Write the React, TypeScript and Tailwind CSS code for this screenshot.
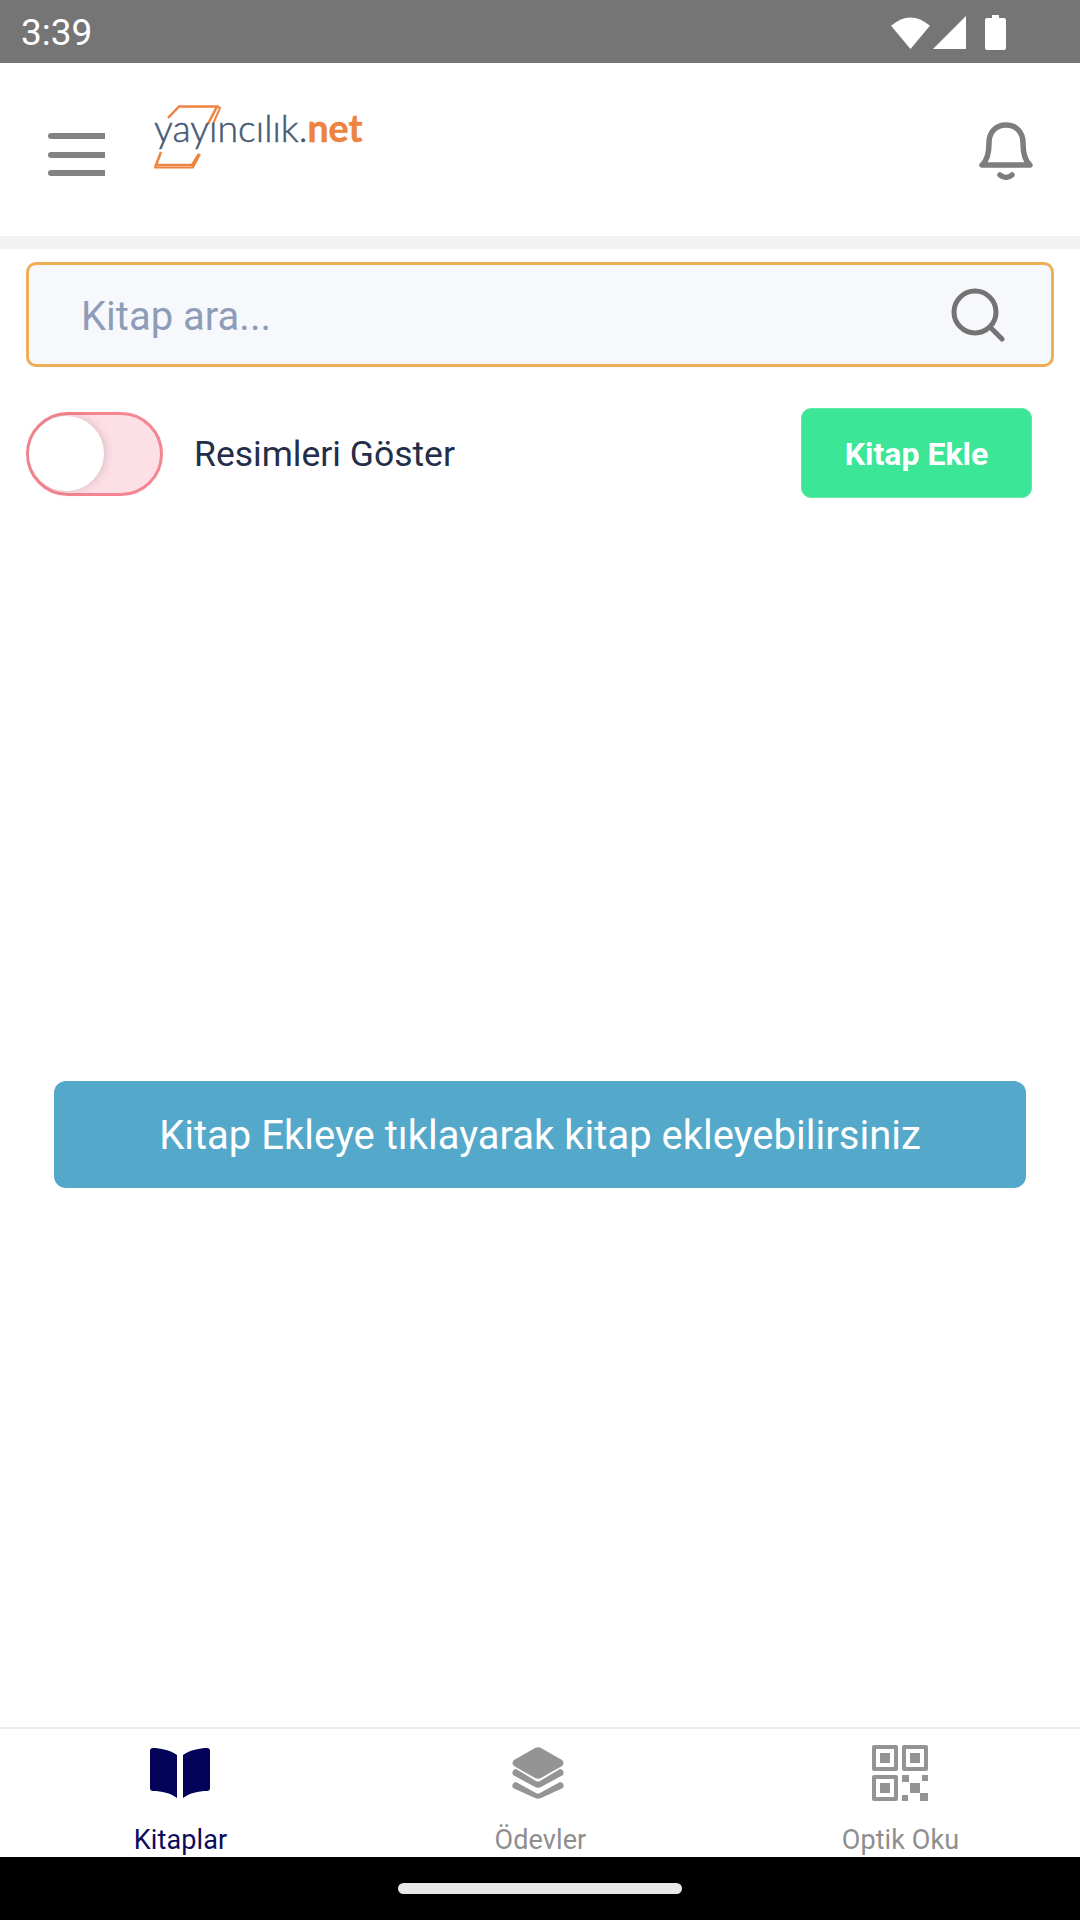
import { useState } from "react";

const roboto = "font-['Roboto',sans-serif]";

const StatusBar = () => (
  <div className="h-[63px] bg-[#757575] flex items-center justify-between pl-[21px] pr-[74px] shrink-0">
    <span className={`${roboto} text-[37px] leading-none text-white mt-[1px]`}>3:39</span>
    <div className="flex items-center mt-[1px]">
      <svg width="39" height="33" viewBox="0 0 40 34" className="mr-[3px]">
        <path d="M20 34 L0 10 Q20 -7 40 10 Z" fill="#fff" />
      </svg>
      <svg width="33" height="33" viewBox="0 0 34 34" className="mr-[19px]">
        <path d="M34 0 V34 H0 Z" fill="#fff" />
      </svg>
      <svg width="21" height="35" viewBox="0 0 21 35">
        <path d="M7 0 H14 V3 H19 Q21 3 21 5 V33 Q21 35 19 35 H2 Q0 35 0 33 V5 Q0 3 2 3 H7 Z" fill="#fff" />
      </svg>
    </div>
  </div>
);

const Logo = () => (
  <div className="relative w-[210px] h-[64px] mt-[-25px] ml-[49px]">
    <svg width="72" height="64" viewBox="0 0 72 64" className="absolute left-0 top-0">
      <path d="M14 13 L25 1.5 H63 L54 19 M45 49 L38 60 H2 L7 47" fill="none" stroke="#ec8440" strokeWidth="2.5" />
      <path d="M63 1.5 L66 3 L59 19 M46 49 L39 62.5 H1 L2 60" fill="none" stroke="#ec8440" strokeWidth="2" />
    </svg>
    <span className="absolute left-0 top-[3px] whitespace-nowrap font-['Lato',sans-serif] text-[37.5px] leading-[40px]">
      <span className="font-light text-[#465a75] [-webkit-text-stroke:0.5px_#465a75]">yayıncılık.</span>
      <span className="font-bold text-[#ec8440] [-webkit-text-stroke:0.5px_#ec8440]">net</span>
    </span>
  </div>
);

const Header = () => (
  <div className="h-[173px] bg-white flex items-center pl-[48px] pr-[47px] shrink-0">
    <div className="flex flex-col gap-[12.5px] w-[57px] mt-[10px]">
      <div className="h-[6px] rounded-l-full bg-[#858283]" />
      <div className="h-[6px] rounded-l-full bg-[#858283]" />
      <div className="h-[6px] rounded-l-full bg-[#858283]" />
    </div>
    <Logo />
    <svg width="54" height="60" viewBox="0 0 54 60" className="ml-auto mt-[4px]" fill="none" stroke="#7f7c7d" strokeWidth="5.5" strokeLinecap="round" strokeLinejoin="round">
      <path d="M3 43 H51 C45 38 44 30 44 21 C44 10 37 3 27 3 C17 3 10 10 10 21 C10 30 9 38 3 43 Z" />
      <path d="M21 53 Q27 58 33 53" />
    </svg>
  </div>
);

const SearchBox = () => (
  <div className="mt-[13px] mx-[26px] h-[105px] rounded-[10px] border-[3px] border-[#edae55] bg-[#f7f8fc] flex items-center pl-[52px] pr-[46px]">
    <span className={`${roboto} text-[40px] text-[#8d9db8] mt-[4px]`}>Kitap ara...</span>
    <svg width="54" height="54" viewBox="0 0 54 54" className="ml-auto" fill="none" stroke="#737373" strokeWidth="5" strokeLinecap="round">
      <circle cx="24" cy="24" r="21" />
      <path d="M39 39 L51 51" />
    </svg>
  </div>
);

const Toggle = () => {
  const [on, setOn] = useState(false);
  return (
    <button
      onClick={() => setOn(!on)}
      className={`relative w-[137px] h-[84px] mt-[1px] rounded-full border-[3px] border-[#f58590] bg-[#fddfe6] flex items-center shrink-0 ${on ? "justify-end" : "justify-start"}`}
    >
      <span className="w-[75px] h-[75px] rounded-full bg-white shadow-[2px_0_8px_rgba(90,60,70,0.2)]" />
    </button>
  );
};

const Tab = ({ label, active, children }: { label: string; active?: boolean; children: React.ReactNode }) => (
  <div className="flex-1 h-full flex flex-col items-center relative overflow-hidden">
    <div className="h-[56px] mt-[16px] flex items-center justify-center">{children}</div>
    <span className={`${roboto} absolute top-[95px] ml-[1px] text-[27px] leading-[32px] tracking-[0.1px] ${active ? "text-[#0b0b5c]" : "text-[#8e8e8e]"}`}>
      {label}
    </span>
  </div>
);

const App = () => {
  return (
    <div className="w-[1080px] h-[1920px] bg-white flex flex-col overflow-hidden">
      <StatusBar />
      <Header />
      <div className="h-[13px] bg-[#f2f2f2] shrink-0" />
      <div className="flex-1 flex flex-col">
        <SearchBox />
        <div className="mt-[41px] pl-[26px] pr-[48px] flex items-center">
          <Toggle />
          <span className={`${roboto} ml-[31px] text-[35.5px] text-[#242e49] mt-[4px]`}>Resimleri Göster</span>
          <div className={`${roboto} ml-auto w-[231px] h-[90px] pt-[1px] rounded-[10px] border border-[#5fe8a9] bg-[#3be696] flex items-center justify-center text-[32px] font-bold text-white`}>
            Kitap Ekle
          </div>
        </div>
        <div className="mt-[583px] mx-[54px] h-[107px] rounded-[12px] bg-[#54a8c9] flex items-center justify-center">
          <span className={`${roboto} text-[40px] text-white mt-[2px]`}>Kitap Ekleye tıklayarak kitap ekleyebilirsiniz</span>
        </div>
      </div>
      <div className="h-[130px] border-t-2 border-[#ececec] flex shrink-0 bg-white">
        <Tab label="Kitaplar" active>
          <svg width="60" height="50" viewBox="0 0 60 50" fill="#020258">
            <path d="M27 7 C20 2 10 0 3 0 Q0 0 0 3 V40 Q0 43 3 43 C12 43 20 45 27 50 Z" />
            <path d="M33 7 C40 2 50 0 57 0 Q60 0 60 3 V40 Q60 43 57 43 C48 43 40 45 33 50 Z" />
          </svg>
        </Tab>
        <Tab label="Ödevler">
          <svg width="52" height="52" viewBox="0 0 52 52" fill="#949494" className="mr-[4px]">
            <path d="M23 1 Q26 -0.5 29 1 L50 13 Q53 16 50 19 L29 31 Q26 32.5 23 31 L2 19 Q-1 16 2 13 Z" />
            <path d="M4 22 L24 34 Q26 35 28 34 L48 22 Q53 23 51 28 L29 40 Q26 41.5 23 40 L1 28 Q-1 23 4 22 Z" />
            <path d="M4 35 L24 46 Q26 47 28 46 L48 35 Q53 36 51 41 L29 51 Q26 52.5 23 51 L1 41 Q-1 36 4 35 Z" />
          </svg>
        </Tab>
        <Tab label="Optik Oku">
          <svg width="56" height="56" viewBox="0 0 56 56" fill="#949494">
            <path fillRule="evenodd" d="M2 0 H24 Q26 0 26 2 V24 Q26 26 24 26 H2 Q0 26 0 24 V2 Q0 0 2 0 Z M4 4 V22 H22 V4 Z" />
            <rect x="8" y="8" width="10" height="10" />
            <path fillRule="evenodd" d="M32 0 H54 Q56 0 56 2 V24 Q56 26 54 26 H32 Q30 26 30 24 V2 Q30 0 32 0 Z M34 4 V22 H52 V4 Z" />
            <rect x="38" y="8" width="10" height="10" />
            <path fillRule="evenodd" d="M2 30 H24 Q26 30 26 32 V54 Q26 56 24 56 H2 Q0 56 0 54 V32 Q0 30 2 30 Z M4 34 V52 H22 V34 Z" />
            <rect x="8" y="38" width="10" height="10" />
            <rect x="30" y="30" width="7" height="7" />
            <rect x="50" y="30" width="6" height="6" />
            <rect x="38" y="38" width="10" height="10" />
            <rect x="30" y="50" width="6" height="6" />
            <rect x="48" y="48" width="8" height="8" />
          </svg>
        </Tab>
      </div>
      <div className="h-[63px] bg-black flex items-center justify-center shrink-0">
        <div className="w-[284px] h-[11px] rounded-full bg-[#e8e8e8]" />
      </div>
    </div>
  );
};

export default App;
